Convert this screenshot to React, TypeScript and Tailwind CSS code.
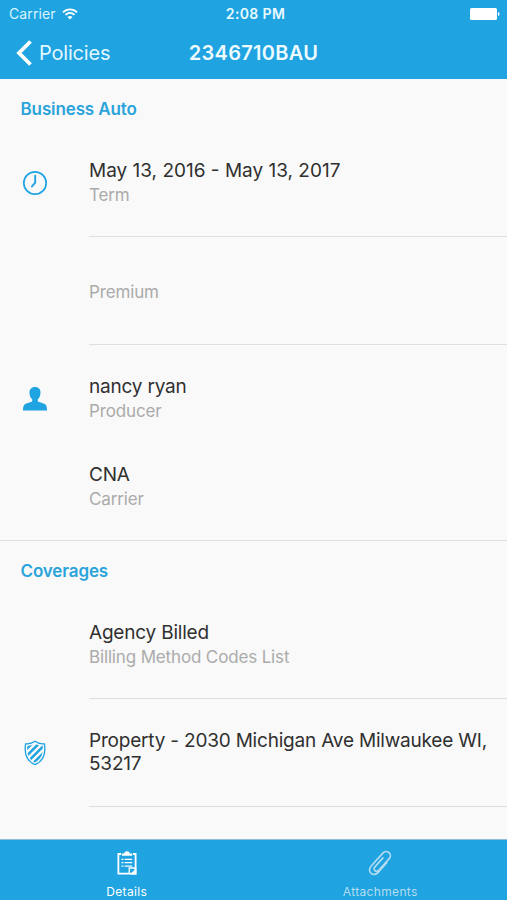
import React from 'react';

type RowProps = {
  title?: string;
  label?: string;
  icon?: React.ReactNode;
  className?: string;
  titleClass?: string;
  labelClass?: string;
};

const ClockIcon = () => (
  <svg width="26" height="26" viewBox="0 0 26 26" fill="none" stroke="#1fa3e1" strokeLinecap="round" strokeLinejoin="round">
    <circle cx="13" cy="13" r="11.2" strokeWidth="1.7" />
    <path d="M13.2 5.8V12.6L10 16.4" strokeWidth="1.9" />
  </svg>
);

const PersonIcon = () => (
  <svg width="26" height="26" viewBox="0 0 26 26" fill="#1fa3e1">
    <path d="M13 1C9.3 1 7.3 3.4 7.5 6.9C7.6 9.8 8.7 11.8 10.2 13.3V15.2C9.2 16.1 5.6 16.8 3.2 18C1.4 19.1 1 21.5 1 24.6H25C25 21.5 24.6 19.1 22.8 18C20.4 16.8 16.8 16.1 15.8 15.2V13.3C17.3 11.8 18.4 9.8 18.5 6.9C18.7 3.4 16.7 1 13 1Z" />
  </svg>
);

const ShieldIcon = () => (
  <svg width="26" height="26" viewBox="0 0 26 26" fill="none" stroke="#1fa3e1">
    <defs>
      <clipPath id="shield">
        <path d="M13 3.6C10.8 5.2 8 5.8 5.3 5.6C4.6 12.8 6.2 19.1 13 22.6C19.8 19.1 21.4 12.8 20.7 5.6C18 5.8 15.2 5.2 13 3.6Z" />
      </clipPath>
    </defs>
    <path d="M13 1.3C10.4 3.2 7 4.2 3.6 3.8C2.2 12.9 4.4 21.2 13 24.6C21.6 21.2 23.8 12.9 22.4 3.8C19 4.2 15.6 3.2 13 1.3Z" strokeWidth="1.3" />
    <g clipPath="url(#shield)" strokeWidth="2.6">
      <path d="M1 12.5L13.5 0M1 19.5L20.5 0M2 25.5L26 1.5M8 26.5L26 8.5" />
    </g>
  </svg>
);

const ClipboardIcon = () => (
  <svg width="20" height="24" viewBox="0 0 20 24" fill="none" stroke="currentColor">
    <path d="M4 3H1.4V22.6H18.6V3H16" strokeWidth="1.8" />
    <path d="M12.2 22.6V17H18.6" strokeWidth="1.3" />
    <path d="M13 23.4L19.4 17V23.4Z" fill="currentColor" stroke="none" />
    <path d="M4.8 4.8V2.4H7.3C7.3 0.9 8.5 0.2 10 0.2C11.5 0.2 12.7 0.9 12.7 2.4H15.2V4.8Z" fill="currentColor" stroke="none" />
    <path d="M4.5 8.3H6.5M7.6 8.3H15.2M4.5 11.7H6.5M7.6 11.7H15.2M4.5 15.1H6.5M7.6 15.1H15.2" strokeWidth="1.3" />
  </svg>
);

const PaperclipIcon = () => (
  <svg width="24" height="26" viewBox="0 0 24 26" fill="none" stroke="currentColor" strokeWidth="1.6" strokeLinecap="round" strokeLinejoin="round">
    <path d="M18.8 12.7L10.3 22.2C8.2 24.7 5.2 25.1 3.1 23.3C1 21.5 1.1 18.4 3 16.2L14.8 3.1C16.5 1.2 19.2 1 21 2.6C22.8 4.2 22.8 6.8 21.2 8.6L10.7 20.2C9.5 21.6 7.9 21.7 6.8 20.7C5.7 19.7 5.8 18.1 6.9 16.9L15 7.9" />
  </svg>
);

const Row = ({ title, label, icon, className = 'h-[108px]', titleClass = 'tracking-[-0.2px]', labelClass = '' }: RowProps) => (
  <div className={`flex ${className}`}>
    <div className="w-[89px] shrink-0 pl-[22px] pt-[41px]">{icon}</div>
    <div className="flex-1 border-b border-inherit pt-[30px]">
      {title && <p className={`text-[19px] leading-[23px] text-[#303030] ${titleClass}`}>{title}</p>}
      {label && <p className={`text-[17px] leading-[27px] tracking-[-0.15px] text-[#ababab] ${labelClass}`}>{label}</p>}
    </div>
  </div>
);

const SectionTitle = ({ children }: { children: React.ReactNode }) => (
  <h2 className="h-[50px] pl-[20.5px] pt-[18px] text-[17px] font-semibold leading-6 tracking-[-0.12px] text-[#2ba4db]">{children}</h2>
);

const App: React.FC = () => {
  return (
    <div className="flex h-[900px] w-[507px] flex-col overflow-hidden bg-[#f9f9f9] font-['Inter',sans-serif]">
      <header className="h-[79px] shrink-0 bg-[#1fa3e1] text-white">
        <div className="grid h-[27px] grid-cols-[1fr_auto_1fr] items-center pl-[9px] pr-[7px] text-[14px] leading-[27px]">
          <div className="flex items-center gap-[6px] text-[#d9f5ff]">
            <span className="tracking-[0.1px]">Carrier</span>
            <svg width="16" height="12" viewBox="0 0 16 12" fill="none" stroke="white" strokeWidth="1.8">
              <path d="M1 4.3C5 0.3 11 0.3 15 4.3M3.5 6.9C6.2 4.3 9.8 4.3 12.5 6.9" />
              <path d="M8 11.5L5.5 9C7 7.7 9 7.7 10.5 9Z" fill="white" stroke="none" />
            </svg>
          </div>
          <span className="pl-[2px] font-semibold tracking-[0.35px] text-[#e9faff]">2:08 PM</span>
          <svg className="justify-self-end" width="30" height="12" viewBox="0 0 30 12" fill="white">
            <rect width="27" height="12" rx="1.5" />
            <path d="M28 4C30 4.3 30 7.7 28 8Z" />
          </svg>
        </div>
        <div className="grid h-[52px] grid-cols-[1fr_auto_1fr] items-center pl-4 pr-4">
          <div className="flex items-center gap-[7px] text-[20px] text-[#e2f8ff]">
            <svg width="16" height="26" viewBox="0 0 16 26" fill="none" stroke="white" strokeWidth="3.8">
              <path d="M14.5 1.5L3 13L14.5 24.5" />
            </svg>
            <span className="tracking-[-0.2px]">Policies</span>
          </div>
          <h1 className="text-[20px] font-semibold tracking-[0.28px] text-[#edfbff]">2346710BAU</h1>
          <span />
        </div>
      </header>

      <main className="min-h-0 flex-1 overflow-hidden">
        <section className="border-b border-[#dedede]">
          <SectionTitle>Business Auto</SectionTitle>
          <Row icon={<ClockIcon />} title="May 13, 2016 - May 13, 2017" label="Term" className="h-[108px] border-[#dedede]" titleClass="" />
          <Row label="Premium" className="h-[108px] border-[#dedede]" labelClass="pt-3" />
          <Row icon={<PersonIcon />} title="nancy ryan" label="Producer" className="h-[88px] border-transparent" />
          <Row title="CNA" label="Carrier" className="h-[107px] border-transparent" />
        </section>
        <section>
          <SectionTitle>Coverages</SectionTitle>
          <Row title="Agency Billed" label="Billing Method Codes List" className="h-[108px] border-[#dedede]" />
          <Row icon={<ShieldIcon />} title="Property - 2030 Michigan Ave Milwaukee WI, 53217" className="h-[108px] border-[#dedede]" />
        </section>
      </main>

      <nav className="grid h-[61px] shrink-0 grid-cols-2 border-t border-[#8fbdd4] bg-[#1fa3e1] text-[12px] tracking-[0.35px]">
        <div className="flex flex-col items-center pt-[11px] text-white">
          <ClipboardIcon />
          <span className="mt-[9px] leading-4">Details</span>
        </div>
        <div className="flex flex-col items-center pt-[10px] text-[#b5dcf0]">
          <PaperclipIcon />
          <span className="mt-[8px] leading-4">Attachments</span>
        </div>
      </nav>
    </div>
  );
};

export default App;
